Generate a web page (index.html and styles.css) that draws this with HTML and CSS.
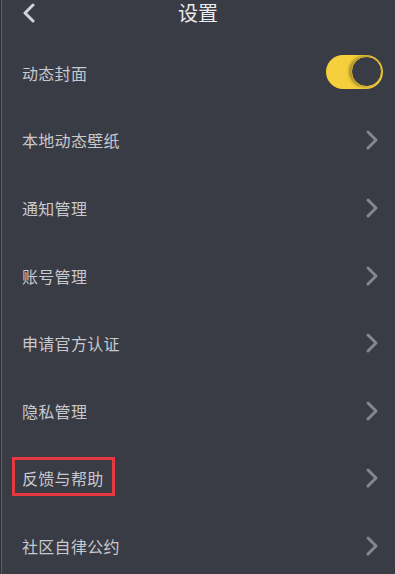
FILE: index.html
```html
<!DOCTYPE html>
<html lang="zh">
<head>
<meta charset="utf-8">
<title>设置</title>
<link rel="stylesheet" href="styles.css">
</head>
<body>
<div class="page">
  <header class="header">
    <span class="back">
      <svg width="14" height="20" viewBox="0 0 14 20"><path d="M11 2 L3 10 L11 18" fill="none" stroke="#d2d3d7" stroke-width="3" stroke-linecap="round" stroke-linejoin="round"/></svg>
    </span>
    <h1 class="title">设置</h1>
  </header>
  <ul class="list">
    <li class="row"><span class="label">动态封面</span><span class="toggle"><span class="knob"></span></span></li>
    <li class="row"><span class="label">本地动态壁纸</span><svg class="chev" width="14" height="22" viewBox="0 0 14 22"><path d="M3 3 L11 11 L3 19" fill="none" stroke="#86878e" stroke-width="3" stroke-linecap="round" stroke-linejoin="round"/></svg></li>
    <li class="row"><span class="label">通知管理</span><svg class="chev" width="14" height="22" viewBox="0 0 14 22"><path d="M3 3 L11 11 L3 19" fill="none" stroke="#86878e" stroke-width="3" stroke-linecap="round" stroke-linejoin="round"/></svg></li>
    <li class="row"><span class="label">账号管理</span><svg class="chev" width="14" height="22" viewBox="0 0 14 22"><path d="M3 3 L11 11 L3 19" fill="none" stroke="#86878e" stroke-width="3" stroke-linecap="round" stroke-linejoin="round"/></svg></li>
    <li class="row"><span class="label">申请官方认证</span><svg class="chev" width="14" height="22" viewBox="0 0 14 22"><path d="M3 3 L11 11 L3 19" fill="none" stroke="#86878e" stroke-width="3" stroke-linecap="round" stroke-linejoin="round"/></svg></li>
    <li class="row"><span class="label">隐私管理</span><svg class="chev" width="14" height="22" viewBox="0 0 14 22"><path d="M3 3 L11 11 L3 19" fill="none" stroke="#86878e" stroke-width="3" stroke-linecap="round" stroke-linejoin="round"/></svg></li>
    <li class="row"><span class="label marked">反馈与帮助</span><svg class="chev" width="14" height="22" viewBox="0 0 14 22"><path d="M3 3 L11 11 L3 19" fill="none" stroke="#86878e" stroke-width="3" stroke-linecap="round" stroke-linejoin="round"/></svg></li>
    <li class="row"><span class="label">社区自律公约</span><svg class="chev" width="14" height="22" viewBox="0 0 14 22"><path d="M3 3 L11 11 L3 19" fill="none" stroke="#86878e" stroke-width="3" stroke-linecap="round" stroke-linejoin="round"/></svg></li>
  </ul>
</div>
</body>
</html>
```

FILE: styles.css
```css
html, body {
  margin: 0;
  padding: 0;
  background: #393b45;
}
body {
  font-family: "Noto Sans CJK SC", "Noto Sans", sans-serif;
}
.page {
  width: 395px;
  height: 574px;
  overflow: hidden;
  box-sizing: border-box;
  border-left: 1px solid #2e3038;
  box-shadow: inset 1px 0 0 #5d5f68;
  position: relative;
}
.header {
  height: 39px;
  display: flex;
  align-items: flex-start;
  justify-content: center;
  position: relative;
  box-sizing: border-box;
  padding-top: 1px;
}
.back {
  position: absolute;
  left: 21px;
  top: 3px;
  display: block;
  line-height: 0;
}
.title {
  margin: 0;
  font-size: 20px;
  font-weight: 400;
  line-height: 24px;
  color: #ececee;
  letter-spacing: 0;
}
.list {
  list-style: none;
  margin: 0;
  padding: 0;
}
.row {
  height: 67.6px;
  display: flex;
  align-items: center;
  justify-content: space-between;
  padding: 0 12px 0 21px;
}
.label {
  font-size: 16px;
  letter-spacing: 0.3px;
  color: #c8c9ce;
  line-height: 20px;
  position: relative;
}
.marked::after {
  content: "";
  position: absolute;
  left: -10px;
  right: -11px;
  top: -11px;
  bottom: -8px;
  border: 3px solid #e5383f;
}
.chev {
  margin-right: 4px;
  display: block;
}
.toggle {
  width: 57px;
  height: 34px;
  border-radius: 17px;
  background: #f6cf3d;
  display: flex;
  align-items: center;
  justify-content: flex-end;
  padding-right: 1px;
  box-sizing: border-box;
  margin-top: -2px;
}
.knob {
  width: 31px;
  height: 31px;
  border-radius: 50%;
  background: #393b45;
  box-shadow: -2px 0 3px rgba(0,0,0,0.35);
  border: 1px solid #e0b830;
  box-sizing: border-box;
}
```
